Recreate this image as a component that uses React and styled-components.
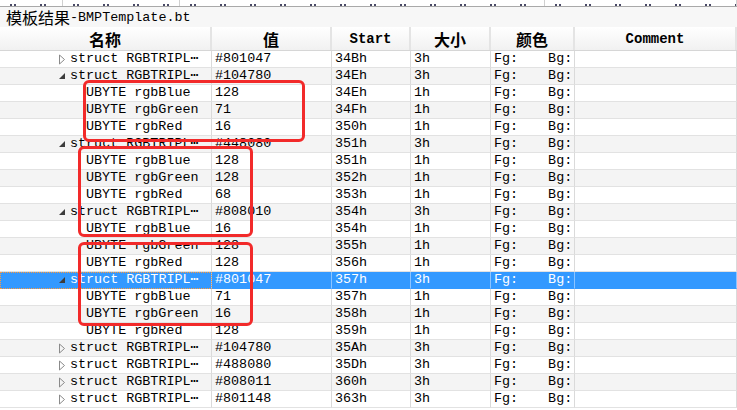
import React from "react";
import styled, { createGlobalStyle } from "styled-components";

const GlobalStyle = createGlobalStyle`
  html, body {
    margin: 0;
    padding: 0;
    background: #ffffff;
    overflow: hidden;
  }
  * {
    box-sizing: border-box;
  }
`;

const COLUMNS = "212px 120px 79px 80px 84px 1fr";
const MONO = `"Liberation Mono", "DejaVu Sans Mono", "Noto Sans CJK SC", monospace`;

const Page = styled.div`
  width: 737px;
  height: 410px;
  overflow: hidden;
  display: flex;
  flex-direction: column;
  font-family: ${MONO};
  color: #000;
`;

const TopStrip = styled.div`
  height: 7px;
  display: flex;
  border-bottom: 1px solid #a9a9a9;
  background: #fff;
`;

// the bottoms of the previous pane's text, cut off by the scroll edge
const StripCell = styled.div`
  width: ${(p) => p.w}px;
  border-right: 1px solid #d0d0d0;
  background-image: repeating-linear-gradient(
    90deg,
    transparent 0 10px,
    #4a4a66 10px 12px,
    transparent 12px 14px,
    #4a4a66 14px 16px,
    transparent 16px 30px
  );
  background-size: 100% 2px;
  background-position: 0 4px;
  background-repeat: no-repeat;
`;

const TitleBar = styled.div`
  height: 20px;
  display: flex;
  align-items: center;
  padding-left: 6px;
  background: #f7f7f7;
  font-size: 13.4px;
  white-space: nowrap;
`;

const Cjk = styled.span`
  font-family: "Noto Sans CJK SC", sans-serif;
  font-size: ${(p) => p.size || 15}px;
  line-height: 1;
`;

const HeaderRow = styled.div`
  display: grid;
  grid-template-columns: ${COLUMNS};
  height: 24px;
  background: linear-gradient(#ffffff, #f1f1f1);
  border-bottom: 1px solid #d6d6d6;
`;

const HeaderCell = styled.div`
  display: flex;
  align-items: center;
  justify-content: center;
  border-right: 2px solid #e4e4e4;
  font-weight: bold;
  font-size: 14px;
  white-space: nowrap;
`;

const Body = styled.div`
  position: relative;
  flex: 1;
  overflow: hidden;
`;

const Row = styled.div`
  display: grid;
  grid-template-columns: ${COLUMNS};
  height: 17px;
  background: ${(p) => (p.selected ? "#3399ff" : p.odd ? "#f4f4f4" : "#ffffff")};
  color: ${(p) => (p.selected ? "#ffffff" : "#000000")};
`;

const Cell = styled.div`
  display: flex;
  align-items: center;
  padding-left: 3px;
  border-right: 1px solid ${(p) => (p.selected ? "#8cc4ff" : "#dadada")};
  border-bottom: 1px solid ${(p) => (p.selected ? "#3399ff" : "#e2e2e2")};
  font-size: 13.4px;
  line-height: 16px;
  white-space: nowrap;
  overflow: hidden;
`;

const NameCell = styled(Cell)`
  padding-left: ${(p) => p.indent}px;
  outline: ${(p) => (p.selected ? "1px dotted #ff9a3c" : "none")};
  outline-offset: -1px;
`;

const Toggle = styled.span`
  width: 12px;
  display: inline-flex;
  align-items: center;
  flex-shrink: 0;
`;

const ColorCell = styled(Cell)`
  gap: 30px;
`;

const Mark = styled.div`
  position: absolute;
  left: ${(p) => p.x}px;
  top: ${(p) => p.y}px;
  width: ${(p) => p.w}px;
  height: ${(p) => p.h}px;
  border: 3px solid #f22a2a;
  border-radius: 6px;
  pointer-events: none;
`;

function Arrow({ open }) {
  if (open) {
    return (
      <svg width="8" height="8" viewBox="0 0 8 8">
        <polygon points="7,1 7,7 1,7" fill="#3c3c3c" />
      </svg>
    );
  }
  return (
    <svg width="8" height="11" viewBox="0 0 8 11">
      <polygon points="1.5,1 6.5,5.5 1.5,10" fill="none" stroke="#8a8a8a" strokeWidth="1" />
    </svg>
  );
}

const rows = [
  { kind: "struct", open: false, value: "#801047", start: "34Bh" },
  { kind: "struct", open: true, value: "#104780", start: "34Eh" },
  { kind: "ubyte", name: "rgbBlue", value: "128", start: "34Eh" },
  { kind: "ubyte", name: "rgbGreen", value: "71", start: "34Fh" },
  { kind: "ubyte", name: "rgbRed", value: "16", start: "350h" },
  { kind: "struct", open: true, value: "#448080", start: "351h" },
  { kind: "ubyte", name: "rgbBlue", value: "128", start: "351h" },
  { kind: "ubyte", name: "rgbGreen", value: "128", start: "352h" },
  { kind: "ubyte", name: "rgbRed", value: "68", start: "353h" },
  { kind: "struct", open: true, value: "#808010", start: "354h" },
  { kind: "ubyte", name: "rgbBlue", value: "16", start: "354h" },
  { kind: "ubyte", name: "rgbGreen", value: "128", start: "355h" },
  { kind: "ubyte", name: "rgbRed", value: "128", start: "356h" },
  { kind: "struct", open: true, value: "#801047", start: "357h", selected: true },
  { kind: "ubyte", name: "rgbBlue", value: "71", start: "357h" },
  { kind: "ubyte", name: "rgbGreen", value: "16", start: "358h" },
  { kind: "ubyte", name: "rgbRed", value: "128", start: "359h" },
  { kind: "struct", open: false, value: "#104780", start: "35Ah" },
  { kind: "struct", open: false, value: "#488080", start: "35Dh" },
  { kind: "struct", open: false, value: "#808011", start: "360h" },
  { kind: "struct", open: false, value: "#801148", start: "363h" },
];

// red annotation boxes, coordinates relative to the table body
const marks = [
  { x: 83, y: 29, w: 222, h: 62 },
  { x: 78, y: 95, w: 175, h: 91 },
  { x: 78, y: 191, w: 175, h: 84 },
];

export default function App() {
  return (
    <Page>
      <GlobalStyle />
      <TopStrip>
        <StripCell w={63} />
        <StripCell w={117} />
        <StripCell w={365} />
        <StripCell w={192} />
      </TopStrip>
      <TitleBar>
        <Cjk size={16}>模板结果</Cjk>-BMPTemplate.bt
      </TitleBar>
      <HeaderRow>
        <HeaderCell><Cjk size={16}>名称</Cjk></HeaderCell>
        <HeaderCell><Cjk size={16}>值</Cjk></HeaderCell>
        <HeaderCell>Start</HeaderCell>
        <HeaderCell><Cjk size={16}>大小</Cjk></HeaderCell>
        <HeaderCell><Cjk size={16}>颜色</Cjk></HeaderCell>
        <HeaderCell>Comment</HeaderCell>
      </HeaderRow>
      <Body>
        {rows.map((r, i) => {
          const isStruct = r.kind === "struct";
          return (
            <Row key={i} odd={i % 2 === 1} selected={r.selected}>
              <NameCell indent={isStruct ? 58 : 86} selected={r.selected}>
                {isStruct && (
                  <Toggle>
                    <Arrow open={r.open} />
                  </Toggle>
                )}
                {isStruct ? "struct RGBTRIPL\u22EF" : `UBYTE ${r.name}`}
              </NameCell>
              <Cell selected={r.selected}>{r.value}</Cell>
              <Cell selected={r.selected}>{r.start}</Cell>
              <Cell selected={r.selected}>{isStruct ? "3h" : "1h"}</Cell>
              <ColorCell selected={r.selected}>
                <span>Fg:</span>
                <span>Bg:</span>
              </ColorCell>
              <Cell selected={r.selected} />
            </Row>
          );
        })}
        {marks.map((m, i) => (
          <Mark key={i} {...m} />
        ))}
      </Body>
    </Page>
  );
}
